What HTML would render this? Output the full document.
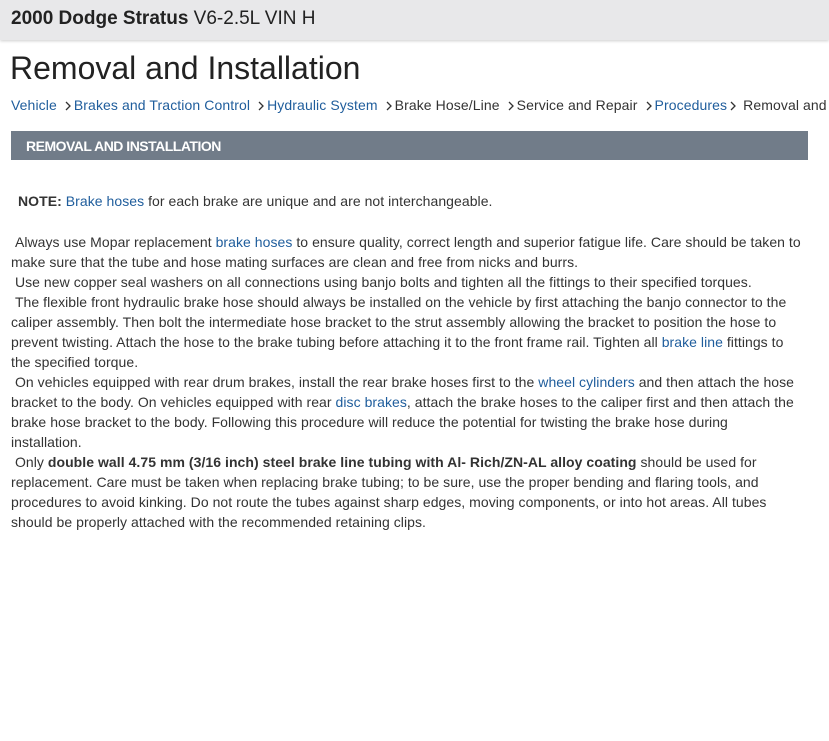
<!DOCTYPE html>
<html><head><meta charset="utf-8"><style>
body{margin:0;width:829px;height:741px;background:#fff;font-family:"Liberation Sans",Arial,sans-serif;color:#333;overflow:hidden;position:relative}
.top{position:absolute;left:0;top:0;width:829px;height:40px;background:#e8e8ea;box-shadow:0 1px 3px rgba(0,0,0,.2)}
.top div{position:absolute;left:11px;top:8px;font-size:19px;color:#222;white-space:nowrap}
h1{position:absolute;left:10px;top:50px;margin:0;font-size:32px;font-weight:normal;color:#222;white-space:nowrap}
.bc{position:absolute;left:11px;top:97px;width:818px;overflow:hidden;font-size:14px;white-space:nowrap;letter-spacing:0.1px}
a{color:#1f5d9c;text-decoration:none}
.gt{display:inline-block;width:6px;height:10px;margin:0 3px 0 8px;vertical-align:-1px}
.bar{position:absolute;left:11px;top:131px;width:797px;height:29px;background:#717c89;color:#fff;font-weight:bold;font-size:14px;letter-spacing:-0.5px}
.bar span{position:absolute;left:15px;top:7px}
.l{position:absolute;left:11px;font-size:14px;white-space:nowrap;letter-spacing:0.05px;color:#333}
</style></head><body>
<div class="top"><div><b>2000 Dodge Stratus</b> V6-2.5L VIN H</div></div>
<h1>Removal and Installation</h1>
<div class="bc"><a>Vehicle</a><svg class="gt" viewBox="0 0 6 10"><path d="M1 1l4 4-4 4" fill="none" stroke="#333" stroke-width="1.3"/></svg><a>Brakes and Traction Control</a><svg class="gt" viewBox="0 0 6 10"><path d="M1 1l4 4-4 4" fill="none" stroke="#333" stroke-width="1.3"/></svg><a>Hydraulic System</a><svg class="gt" viewBox="0 0 6 10"><path d="M1 1l4 4-4 4" fill="none" stroke="#333" stroke-width="1.3"/></svg>Brake Hose/Line<svg class="gt" viewBox="0 0 6 10"><path d="M1 1l4 4-4 4" fill="none" stroke="#333" stroke-width="1.3"/></svg>Service and Repair<svg class="gt" viewBox="0 0 6 10"><path d="M1 1l4 4-4 4" fill="none" stroke="#333" stroke-width="1.3"/></svg><a>Procedures</a><svg class="gt" viewBox="0 0 6 10" style="margin-left:3px;margin-right:7px"><path d="M1 1l4 4-4 4" fill="none" stroke="#333" stroke-width="1.3"/></svg>Removal and Installation</div>
<div class="bar"><span>REMOVAL AND INSTALLATION</span></div>
<div class="l" style="top:193px;left:18px"><b>NOTE:</b> <a>Brake hoses</a> for each brake are unique and are not interchangeable.</div>
<div class="l" style="top:234px">&nbsp;Always use Mopar replacement <a>brake hoses</a> to ensure quality, correct length and superior fatigue life. Care should be taken to</div>
<div class="l" style="top:254px">make sure that the tube and hose mating surfaces are clean and free from nicks and burrs.</div>
<div class="l" style="top:274px">&nbsp;Use new copper seal washers on all connections using banjo bolts and tighten all the fittings to their specified torques.</div>
<div class="l" style="top:294px">&nbsp;The flexible front hydraulic brake hose should always be installed on the vehicle by first attaching the banjo connector to the</div>
<div class="l" style="top:314px">caliper assembly. Then bolt the intermediate hose bracket to the strut assembly allowing the bracket to position the hose to</div>
<div class="l" style="top:334px">prevent twisting. Attach the hose to the brake tubing before attaching it to the front frame rail. Tighten all <a>brake line</a> fittings to</div>
<div class="l" style="top:354px">the specified torque.</div>
<div class="l" style="top:374px">&nbsp;On vehicles equipped with rear drum brakes, install the rear brake hoses first to the <a>wheel cylinders</a> and then attach the hose</div>
<div class="l" style="top:394px">bracket to the body. On vehicles equipped with rear <a>disc brakes</a>, attach the brake hoses to the caliper first and then attach the</div>
<div class="l" style="top:414px">brake hose bracket to the body. Following this procedure will reduce the potential for twisting the brake hose during</div>
<div class="l" style="top:434px">installation.</div>
<div class="l" style="top:454px">&nbsp;Only <b>double wall 4.75 mm (3/16 inch) steel brake line tubing with Al- Rich/ZN-AL alloy coating</b> should be used for</div>
<div class="l" style="top:474px">replacement. Care must be taken when replacing brake tubing; to be sure, use the proper bending and flaring tools, and</div>
<div class="l" style="top:494px">procedures to avoid kinking. Do not route the tubes against sharp edges, moving components, or into hot areas. All tubes</div>
<div class="l" style="top:514px">should be properly attached with the recommended retaining clips.</div>
</body></html>
